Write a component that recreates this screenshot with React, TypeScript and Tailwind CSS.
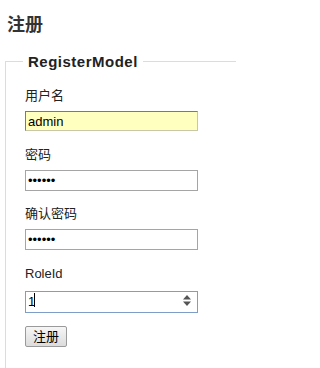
import React from "react";

function Label({ children }: { children: React.ReactNode }) {
  return (
    <div className="mb-[6px] text-[13px] leading-[18px] text-[#222] font-['Liberation_Sans','Noto_Sans_CJK_SC',sans-serif]">
      {children}
    </div>
  );
}

export default function App() {
  return (
    <div className="w-[236px] h-[368px] overflow-hidden bg-white pl-[5px] font-['Liberation_Sans','Noto_Sans_CJK_SC',sans-serif]">
      <h2 className="pt-[12px] pl-[2px] text-[18px] leading-[22px] font-bold text-[#333] font-['Noto_Sans_CJK_SC',serif]">
        注册
      </h2>
      <fieldset className="mt-[19px] w-[280px] border border-[#dcdcdc] pl-[19px] pt-[17px] pb-[40px]">
        <legend className="-ml-[2px] px-[5px] text-[15px] leading-[17px] font-bold tracking-[0.5px] text-[#222] font-['Liberation_Sans',sans-serif]">
          RegisterModel
        </legend>

        <div className="flex flex-col items-start">
          <Label>用户名</Label>
          <input
            readOnly
            value="admin"
            className="mb-[15px] h-[20px] w-[173px] border border-[#c8c8a8] border-t-[#7a7a7a] border-l-[#7a7a7a] bg-[#ffffc0] px-[2px] text-[13px] leading-[18px] text-black outline-none font-['Liberation_Sans',sans-serif]"
          />

          <Label>密码</Label>
          <input
            readOnly
            type="password"
            value="123456"
            className="mb-[14px] h-[21px] w-[173px] border border-[#a5a5a5] bg-white px-[2px] text-[13px] text-black outline-none font-['Liberation_Sans',sans-serif]"
          />

          <Label>确认密码</Label>
          <input
            readOnly
            type="password"
            value="123456"
            className="mb-[15px] h-[21px] w-[173px] border border-[#a5a5a5] bg-white px-[2px] text-[13px] text-black outline-none font-['Liberation_Sans',sans-serif]"
          />

          <Label>RoleId</Label>
          <div className="relative mb-[15px] h-[22px] w-[173px]">
            <input
              readOnly
              value="1"
              className="h-full w-full border border-[#7f9dc9] bg-white px-[2px] text-[13px] text-black outline-none font-['Liberation_Sans',sans-serif]"
            />
            <span className="absolute left-[9px] top-[4px] h-[14px] w-[1px] bg-black" />
            <svg
              className="absolute right-[7px] top-[6px]"
              width="8"
              height="11"
              viewBox="0 0 8 11"
            >
              <path d="M4 0 L8 4.5 L0 4.5 Z" fill="#555" />
              <path d="M0 6.5 L8 6.5 L4 11 Z" fill="#555" />
            </svg>
          </div>

          <button className="h-[21px] w-[42px] rounded-[2px] border border-[#9a9a9a] bg-gradient-to-b from-[#f6f6f6] to-[#dcdcdc] text-[13px] leading-[18px] text-black font-['Liberation_Sans','Noto_Sans_CJK_SC',sans-serif]">
            注册
          </button>
        </div>
      </fieldset>
    </div>
  );
}
